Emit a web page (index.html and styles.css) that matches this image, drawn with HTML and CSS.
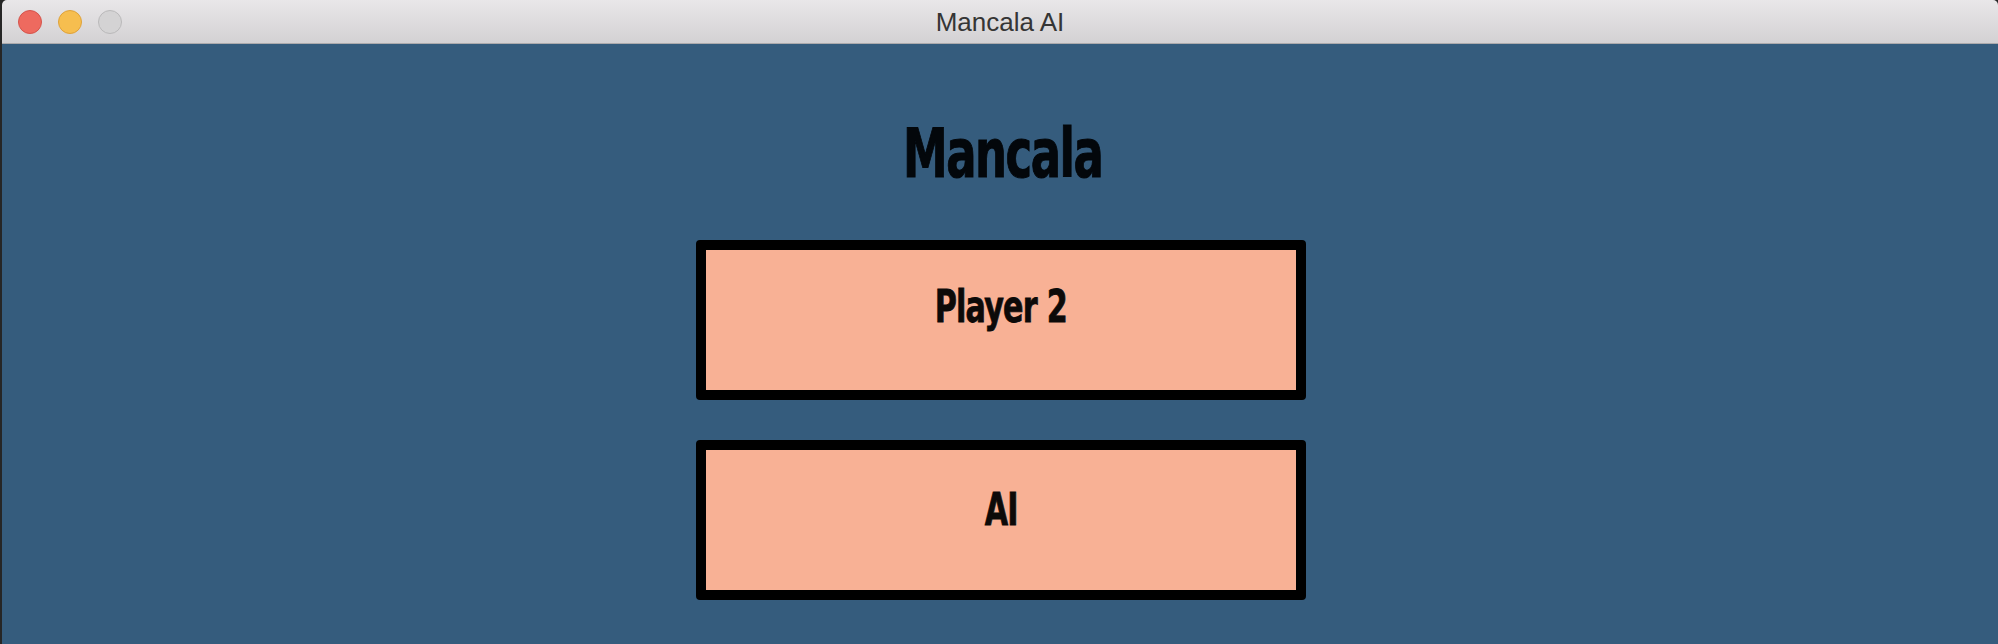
FILE: index.html
```html
<!DOCTYPE html>
<html lang="en">
<head>
<meta charset="utf-8">
<title>Mancala AI</title>
<link rel="stylesheet" href="styles.css">
</head>
<body>
<div class="window">
  <header class="titlebar">
    <div class="lights">
      <span class="light light-close"></span>
      <span class="light light-min"></span>
      <span class="light light-max"></span>
    </div>
    <div class="title">Mancala AI</div>
    <div class="spacer"></div>
  </header>
  <main class="content">
    <h1 class="heading"><span class="heading-text">Mancala</span></h1>
    <div class="menu">
      <button class="btn"><span class="label">Player 2</span></button>
      <button class="btn btn-ai"><span class="label">AI</span></button>
    </div>
  </main>
</div>
</body>
</html>
```
FILE: styles.css
```css
html, body {
  margin: 0;
  padding: 0;
  width: 1998px;
  height: 644px;
  overflow: hidden;
  background: #262626;
}

.window {
  margin-left: 2px;
  width: 1996px;
  height: 644px;
  display: flex;
  flex-direction: column;
  border-radius: 5px 5px 0 0;
  overflow: hidden;
}

.titlebar {
  height: 43px;
  flex: none;
  display: grid;
  grid-template-columns: 1fr auto 1fr;
  align-items: center;
  background: linear-gradient(#e9e7e9, #d3d1d3);
  border-bottom: 1px solid #acaaac;
}

.lights {
  display: flex;
  align-items: center;
  gap: 16px;
  padding-left: 16px;
}

.light {
  width: 24px;
  height: 24px;
  border-radius: 50%;
  box-sizing: border-box;
}

.light-close {
  background: #ee6a5f;
  border: 1px solid #d5544c;
}

.light-min {
  background: #f6be4f;
  border: 1px solid #dfa23a;
}

.light-max {
  background: #d4d3d4;
  border: 1px solid #bab9ba;
}

.title {
  font-family: "Liberation Sans", Arial, sans-serif;
  font-size: 26px;
  line-height: 41px;
  padding-top: 2px;
  color: #353535;
}

.content {
  flex: 1;
  background: #355c7d;
  display: flex;
  flex-direction: column;
  align-items: center;
  padding-top: 77px;
}

.heading {
  margin: 0;
  font-family: "DejaVu Sans Condensed", "DejaVu Sans", sans-serif;
  font-weight: bold;
  font-size: 67px;
  line-height: 66px;
  letter-spacing: -2px;
  color: #03070b;
  padding-left: 5px;
}

.heading-text {
  display: inline-block;
  transform: scaleX(0.745);
  transform-origin: center;
  -webkit-text-stroke: 1px #03070b;
}

.menu {
  margin-top: 53px;
  display: flex;
  flex-direction: column;
  gap: 40px;
  padding-left: 2px;
}

.btn {
  box-sizing: border-box;
  width: 610px;
  height: 160px;
  margin: 0;
  padding: 34px 0 0;
  border: 10px solid #000;
  border-radius: 4px;
  background: #f8b195;
  display: flex;
  justify-content: center;
  align-items: flex-start;
  font-family: "DejaVu Sans Condensed", "DejaVu Sans", sans-serif;
  font-weight: bold;
  font-size: 45px;
  line-height: 45px;
  letter-spacing: -1px;
  color: #0d0a09;
  cursor: pointer;
}

.label {
  display: inline-block;
  transform: scaleX(0.745);
  transform-origin: center;
  -webkit-text-stroke: 0.8px #0d0a09;
}

.btn-ai {
  padding-top: 37px;
}
```
